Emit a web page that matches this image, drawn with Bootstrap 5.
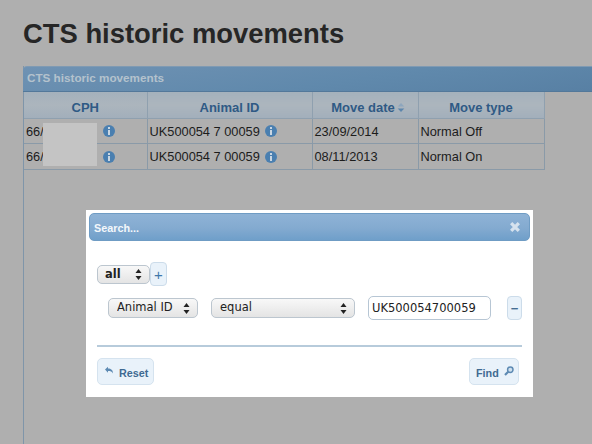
<!DOCTYPE html>
<html lang="en">
<head>
<meta charset="utf-8">
<title>CTS historic movements</title>
<link href="https://cdn.jsdelivr.net/npm/bootstrap@5.3.0/dist/css/bootstrap.min.css" rel="stylesheet">
<style>
html,body{height:100%;}
body{background:#afafaf;font-family:"Liberation Sans",Arial,sans-serif;color:#1f1f1f;overflow:hidden;position:relative;}
.page-wrap{height:444px;padding:18px 0 0 23px;overflow:hidden;}
.page-title{font-size:27.4px;font-weight:700;line-height:31px;margin:0 0 17px;color:#262626;white-space:nowrap;}
.grid-panel{width:600px;height:400px;border-left:1px solid #7f95a9;}
.grid-cap{height:26px;margin-left:-1px;border-radius:4px 0 0 0;background:linear-gradient(172deg,#6f92b3 0,#6089ac 55%,#577fa3 100%);border-top:1px solid #7f9ab3;border-bottom:1px solid #53789a;color:#b4c2cd;font-weight:700;font-size:11.7px;line-height:22px;padding-left:4px;}
.hist-table{border-collapse:collapse;table-layout:fixed;width:520px;}
.hist-table th{height:26px;background:linear-gradient(#a4b1bc,#acb5bd 50%,#a2afbb);color:#2f5a85;font-size:13px;font-weight:700;text-align:center;border-right:1px solid #8fa0af;border-bottom:1px solid #8fa0af;padding:5px 0 0;}
.hist-table th.sorted-col{padding-left:6px;}
.hist-table td{height:25.500px;font-size:12.8px;padding:1px 0 0 2px;background:transparent;border-right:1px solid #8a9aa8;border-bottom:1px solid #8a9aa8;color:#1c1c1c;white-space:nowrap;}
.cell-split{display:flex;align-items:center;justify-content:space-between;}
.info-dot{width:12px;height:12px;flex:none;display:block;}
.cph-cell{padding-right:32px !important;}
.animal-cell{padding-right:35px !important;}
.masked{position:absolute;left:43px;top:123px;width:54px;height:43px;background:#c4c4c4;}
.sort-mark{width:8px;height:11px;display:inline-block;vertical-align:-1px;margin-left:2px;}
.search-dialog{position:absolute;left:86px;top:210px;width:447px;height:187px;background:#fff;padding:3px;}
.dlg-head{height:28px;border:1px solid #6f9cc4;border-radius:5px;background:linear-gradient(#8fb3d6,#83aad0 55%,#6f9fca);color:#f3f7fb;font-weight:700;font-size:10.8px;padding:2px 8px 0 4px;}
.dlg-x{width:12px;height:12px;display:block;margin-top:-3px;}
.dlg-body{padding:21px 8px 0 8px;}
.rule-top{height:24px;}
.fake-select{appearance:none;-webkit-appearance:none;font-family:"DejaVu Sans",sans-serif;font-size:11.5px;color:#222;height:20px;border:1px solid #bcc6cf;border-radius:5px;padding:0 0 0 8px;background-color:#eee;background-image:url("data:image/svg+xml,%3Csvg xmlns='http://www.w3.org/2000/svg' width='7' height='11'%3E%3Cpath d='M3.500 0 6.500 4H.5zM3.500 11 .5 7h6z' fill='%23222'/%3E%3C/svg%3E"),linear-gradient(#f8f8f8,#e4e4e4);background-repeat:no-repeat,repeat;background-position:right 7px center,0 0;outline:0;box-shadow:none;}
.sel-all{width:53px;font-weight:700;padding-left:7px;height:19px;}
.sel-field{width:90px;}
.sel-op{width:144px;}
.mini-btn{width:16px;background:#e9f2fa;border:1px solid #ccdcea;border-radius:4px;color:#3f78ab;font-size:15px;line-height:1;padding:0;display:flex;align-items:center;justify-content:center;}
.plus-btn{height:24px;width:17px;}
.minus-btn{height:24px;width:15px;font-weight:700;color:#456d92;font-size:13px;}
.cond-row{margin:10px 0 0 11px;gap:13px;}
.val-input{width:123px;height:24px;border:1px solid #b7c6d4;border-radius:5px;font-family:"DejaVu Sans",sans-serif;font-size:11.5px;color:#222;padding:0 3px;background:#fff;outline:0;}
.minus-gap{margin-left:3px;}
.dlg-rule{height:2px;background:#b7cbdb;margin:25px 0 0 0;}
.act-row{margin-top:11px;padding-right:3px;}
.act-btn{height:27px;background:#e9f2fa;border:1px solid #d5e3ef;border-radius:5px;color:#3f6a92;font-weight:700;font-size:10.8px;display:flex;align-items:center;padding:3px 0 0;}
.reset-btn{width:57px;padding-left:6px;gap:5px;}
.find-btn{width:50px;padding-left:6px;gap:5px;}
.btn-ico{width:10px;height:10px;flex:none;display:block;margin-top:-4px;}
</style>
</head>
<body>
<div class="page-wrap">
  <h1 class="page-title">CTS historic movements</h1>
  <div class="grid-panel">
    <div class="grid-cap">CTS historic movements</div>
    <table class="hist-table">
      <colgroup><col style="width:123px"><col style="width:165px"><col style="width:106px"><col style="width:126px"></colgroup>
      <thead><tr>
        <th>CPH</th><th>Animal ID</th>
        <th class="sorted-col">Move date<svg class="sort-mark" viewBox="0 0 7 10"><path d="M3.500 1 6.500 4H.5z" fill="#8ea6bd"/><path d="M3.500 9 .5 6h6z" fill="#5d86ad"/></svg></th>
        <th>Move type</th>
      </tr></thead>
      <tbody>
        <tr>
          <td class="cph-cell"><div class="cell-split"><span>66/</span><svg class="info-dot" viewBox="0 0 12 12"><circle cx="6" cy="6" r="6" fill="#4a7fb0"/><rect x="5" y="2" width="2" height="2" fill="#c9d6e2"/><rect x="5" y="5" width="2" height="5" fill="#c9d6e2"/></svg></div></td>
          <td class="animal-cell"><div class="cell-split"><span>UK500054 7 00059</span><svg class="info-dot" viewBox="0 0 12 12"><circle cx="6" cy="6" r="6" fill="#4a7fb0"/><rect x="5" y="2" width="2" height="2" fill="#c9d6e2"/><rect x="5" y="5" width="2" height="5" fill="#c9d6e2"/></svg></div></td>
          <td>23/09/2014</td><td>Normal Off</td>
        </tr>
        <tr>
          <td class="cph-cell"><div class="cell-split"><span>66/</span><svg class="info-dot" viewBox="0 0 12 12"><circle cx="6" cy="6" r="6" fill="#4a7fb0"/><rect x="5" y="2" width="2" height="2" fill="#c9d6e2"/><rect x="5" y="5" width="2" height="5" fill="#c9d6e2"/></svg></div></td>
          <td class="animal-cell"><div class="cell-split"><span>UK500054 7 00059</span><svg class="info-dot" viewBox="0 0 12 12"><circle cx="6" cy="6" r="6" fill="#4a7fb0"/><rect x="5" y="2" width="2" height="2" fill="#c9d6e2"/><rect x="5" y="5" width="2" height="5" fill="#c9d6e2"/></svg></div></td>
          <td>08/11/2013</td><td>Normal On</td>
        </tr>
      </tbody>
    </table>
  </div>
</div>
<div class="masked"></div>
<div class="search-dialog">
  <div class="dlg-head d-flex align-items-center justify-content-between">
    <span>Search...</span>
    <svg class="dlg-x" viewBox="0 0 11 11"><path d="M2 2 9 9M9 2 2 9" stroke="#d6e2ee" stroke-width="3"/></svg>
  </div>
  <div class="dlg-body">
    <div class="d-flex align-items-center rule-top">
      <select class="fake-select sel-all"><option>all</option></select>
      <button type="button" class="mini-btn plus-btn">+</button>
    </div>
    <div class="d-flex align-items-center cond-row">
      <select class="fake-select sel-field"><option>Animal ID</option></select>
      <select class="fake-select sel-op"><option>equal</option></select>
      <input class="val-input" type="text" value="UK500054700059">
      <button type="button" class="mini-btn minus-btn minus-gap">−</button>
    </div>
    <div class="dlg-rule"></div>
    <div class="d-flex justify-content-between act-row">
      <button type="button" class="act-btn reset-btn"><svg class="btn-ico" viewBox="0 0 10 10"><path d="M1 3.500 4 .8v1.800c3 0 5 1.400 5 5-1-2-2.500-2.500-5-2.500v1.600z" fill="#5d8ab3"/></svg>Reset</button>
      <button type="button" class="act-btn find-btn">Find<svg class="btn-ico" viewBox="0 0 10 10"><circle cx="6.300" cy="3.700" r="2.700" fill="#cfe0ee" stroke="#5d8ab3" stroke-width="1.500"/><path d="M4.200 5.800 1 9" stroke="#5d8ab3" stroke-width="2.200"/></svg></button>
    </div>
  </div>
</div>
<script src="https://cdn.jsdelivr.net/npm/bootstrap@5.3.0/dist/js/bootstrap.bundle.min.js"></script>
</body>
</html>
